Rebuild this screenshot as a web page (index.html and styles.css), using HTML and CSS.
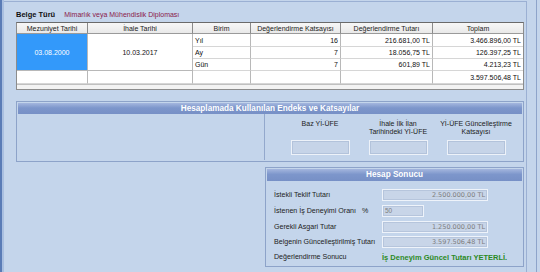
FILE: index.html
```html
<!DOCTYPE html>
<html lang="tr">
<head>
<meta charset="utf-8">
<title>Belge</title>
<link rel="stylesheet" href="styles.css">
</head>
<body>
<div class="window">
  <div class="stripe"></div>
  <div class="group">
    <div class="belge"><span class="lbl">Belge Türü</span><span class="val">Mimarlık veya Mühendislik Diploması</span></div>
    <div class="grid">
      <div class="tbl">
        <div class="th">Mezuniyet Tarihi</div>
        <div class="th">İhale Tarihi</div>
        <div class="th">Birim</div>
        <div class="th">Değerlendirme Katsayısı</div>
        <div class="th">Değerlendirme Tutarı</div>
        <div class="th last">Toplam</div>

        <div class="td sel span3">03.08.2000</div>
        <div class="td c span3">10.03.2017</div>
        <div class="td">Yıl</div>
        <div class="td r">16</div>
        <div class="td r">216.681,00 TL</div>
        <div class="td r last">3.466.896,00 TL</div>

        <div class="td">Ay</div>
        <div class="td r">7</div>
        <div class="td r">18.056,75 TL</div>
        <div class="td r last">126.397,25 TL</div>

        <div class="td">Gün</div>
        <div class="td r">7</div>
        <div class="td r">601,89 TL</div>
        <div class="td r last">4.213,23 TL</div>

        <div class="td"></div>
        <div class="td"></div>
        <div class="td"></div>
        <div class="td"></div>
        <div class="td"></div>
        <div class="td r last">3.597.506,48 TL</div>
      </div>
      <div class="hscroll"></div>
    </div>

    <div class="panel endeks">
      <div class="bar">Hesaplamada Kullanılan Endeks ve Katsayılar</div>
      <div class="pbody">
        <div class="pleft"></div>
        <div class="pright">
          <div class="col"><div class="clabel">Baz Yİ-ÜFE</div><div class="box"></div></div>
          <div class="col"><div class="clabel">İhale İlk İlan<br>Tarihindeki Yİ-ÜFE</div><div class="box"></div></div>
          <div class="col"><div class="clabel">Yİ-ÜFE Güncelleştirme<br>Katsayısı</div><div class="box"></div></div>
        </div>
      </div>
    </div>

    <div class="lower">
      <div class="panel sonuc">
        <div class="bar">Hesap Sonucu</div>
        <div class="rows">
          <div class="row r1"><span class="rl">İstekli Teklif Tutarı</span><span class="inp wide">2.500.000,00 TL</span></div>
          <div class="row r2"><span class="rl">İstenen İş Deneyimi Oranı<span class="pct">%</span></span><span class="inp short">50</span></div>
          <div class="row r3"><span class="rl">Gerekli Asgari Tutar</span><span class="inp wide">1.250.000,00 TL</span></div>
          <div class="row r4"><span class="rl">Belgenin Güncelleştirilmiş Tutarı</span><span class="inp wide">3.597.506,48 TL</span></div>
          <div class="row r5"><span class="rl">Değerlendirme Sonucu</span><span class="ok">İş Deneyim Güncel Tutarı YETERLİ.</span></div>
        </div>
      </div>
    </div>
  </div>
  <div class="edge"></div>
</div>
</body>
</html>
```
FILE: styles.css
```css
* { box-sizing: border-box; margin: 0; padding: 0; }
html, body { width: 540px; height: 272px; overflow: hidden; }
body {
  font-family: "Liberation Sans", Arial, sans-serif;
  font-size: 7px;
  color: #1c1c1c;
  background: #c4d5eb;
}
.window { display: flex; height: 272px; }
.stripe {
  width: 4px;
  border-left: 2px solid #5a7cb6;
  background: #a9bfe0;
}
.group {
  width: 523px;
  margin-top: 1px;
  border: 1px solid #9bb0d3;
  border-bottom: none;
  border-left: none;
  padding: 7px 2px 0 12px;
}
.edge {
  flex: 1;
  margin-right: 3px;
  border-right: 1px solid #8ea4ca;
}
.belge {
  display: flex;
  gap: 9px;
  height: 11px;
  line-height: 11px;
  margin-bottom: 2px;
}
.belge .lbl { font-weight: bold; font-size: 7.5px; color: #111; }
.belge .val { color: #8a1a4a; }

.grid {
  width: 508px;
  border: 1px solid #8c8c8c;
  border-top-color: #6a6a6a;
  background: #fff;
}
.tbl {
  display: grid;
  grid-template-columns: 71px 105px 58px 90px 92px 90px;
  grid-template-rows: 11px 13px 12px 12px 13px;
}
.th {
  background: linear-gradient(#f7f7f7, #e9e9e9);
  border-right: 1px solid #8a8a8a;
  border-bottom: 1px solid #9a9a9a;
  display: flex;
  align-items: center;
  justify-content: center;
  color: #222;
  white-space: nowrap;
  overflow: hidden;
}
.td {
  border-right: 1px solid #b8b8b8;
  border-bottom: 1px solid #d6d6d6;
  display: flex;
  align-items: center;
  padding: 0 2px;
  white-space: nowrap;
  color: #111;
}
.last { border-right: none; }
.span3 { grid-row: span 3; border-bottom-color: #b8b8b8; }
.c { justify-content: center; }
.r { justify-content: flex-end; }
.sel {
  background: #3399fa;
  color: #fff;
  justify-content: center;
}
.hscroll {
  height: 5px;
  border-top: 1px solid #c0c0c0;
  background: #f3f3f3;
}

.panel {
  border: 1px solid #8da3c9;
  padding: 1px;
  background: #c4d5eb;
}
.bar {
  height: 11px;
  line-height: 11px;
  background: linear-gradient(#a4b6de, #7d96cb 45%, #7790c6);
  color: #fff;
  font-weight: bold;
  font-size: 8.2px;
  text-align: center;
  white-space: nowrap;
}
.endeks { margin-top: 11px; height: 61px; }
.pbody { display: flex; height: 46px; }
.pleft { width: 247px; border-right: 1px solid #93a8cc; }
.pright { display: flex; padding-left: 16px; padding-top: 6px; }
.col {
  width: 78px;
  display: flex;
  flex-direction: column;
  align-items: center;
}
.clabel {
  height: 20px;
  line-height: 8px;
  text-align: center;
  white-space: nowrap;
  color: #222;
}
.box {
  width: 59px;
  height: 15px;
  border: 1px solid #edf2f9;
  background: #c6d4e8;
  box-shadow: inset 0 0 0 1px #b3c3db;
}

.lower { display: flex; padding-left: 249px; margin-top: 5px; }
.sonuc { width: 259px; height: 100px; }
.sonuc .bar { height: 12px; line-height: 12px; }
.rows { padding: 8px 0 0 7px; }
.row { display: flex; align-items: center; height: 12px; }
.r1, .r2 { margin-bottom: 4px; }
.r3, .r4 { margin-bottom: 3px; }
.rl { width: 108px; white-space: nowrap; color: #222; font-size: 7.1px; }
.pct { margin-left: 6px; }
.inp {
  height: 12px;
  border: 1px solid #eef3fa;
  background: #c8d5e8;
  box-shadow: inset 0 0 0 1px #b6c5dc;
  color: #7e7e7e;
  font-family: "DejaVu Sans", sans-serif;
  font-size: 6.5px;
  line-height: 10px;
  padding: 0 2px;
  white-space: nowrap;
}
.wide { width: 106px; text-align: right; }
.short { width: 42px; font-family: "Liberation Sans", Arial, sans-serif; font-size: 6.5px; }
.ok { color: #2b8a1e; font-weight: bold; font-size: 7.5px; white-space: nowrap; }
```
